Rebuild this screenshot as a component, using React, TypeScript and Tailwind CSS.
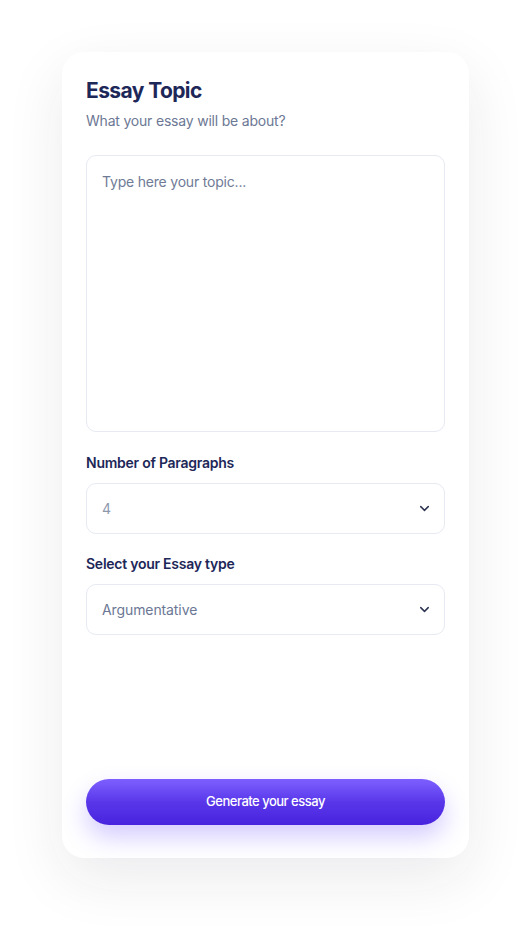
import { ChevronDown } from "lucide-react";

function SelectBox({ value, muted }: { value: string; muted?: boolean }) {
  return (
    <div className="flex h-[51px] items-center justify-between rounded-[10px] border border-[#e7eaf2] bg-white pl-[15px] pr-3">
      <span className={`text-[14px] tracking-[-0.1px] ${muted ? "text-[#8e98ad]" : "text-[#6b7794]"}`}>{value}</span>
      <ChevronDown size={15} strokeWidth={2.3} className="text-[#2b3350]" />
    </div>
  );
}

export default function App() {
  return (
    <div className="min-h-[930px] bg-white pt-[52px] font-['Inter',sans-serif]">
      <div className="mx-auto flex h-[806px] w-[407px] flex-col rounded-[22px] bg-white px-6 pb-[33px] pt-[25px] shadow-[0_20px_60px_rgba(30,30,60,0.09)]">
        <h1 className="text-[21px] font-bold leading-[28px] tracking-[-0.6px] text-[#1d2758]">Essay Topic</h1>
        <p className="mt-[6px] text-[14px] leading-[20px] tracking-[-0.2px] text-[#6c7894]">What your essay will be about?</p>

        <textarea
          placeholder="Type here your topic..."
          className="mt-6 h-[277px] w-full resize-none rounded-[10px] border border-[#e7eaf2] px-[15px] py-[15px] text-[14px] tracking-[-0.2px] text-[#1d2758] outline-none placeholder:text-[#6f7b96]"
        />

        <label className="mt-[21px] text-[14px] font-semibold leading-[20px] tracking-[-0.25px] text-[#1d2758]">Number of Paragraphs</label>
        <div className="mt-[10px]">
          <SelectBox value="4" muted />
        </div>

        <label className="mt-5 text-[14px] font-semibold leading-[20px] tracking-[-0.25px] text-[#1d2758]">Select your Essay type</label>
        <div className="mt-[10px]">
          <SelectBox value="Argumentative" />
        </div>

        <button className="mt-auto h-[46px] w-full rounded-full bg-gradient-to-b from-[#7d5fff] via-[#5a36ea] to-[#4822de] text-[13px] font-medium tracking-[-0.5px] text-white shadow-[0_12px_24px_rgba(100,70,255,0.28)]">
          Generate your essay
        </button>
      </div>
    </div>
  );
}
